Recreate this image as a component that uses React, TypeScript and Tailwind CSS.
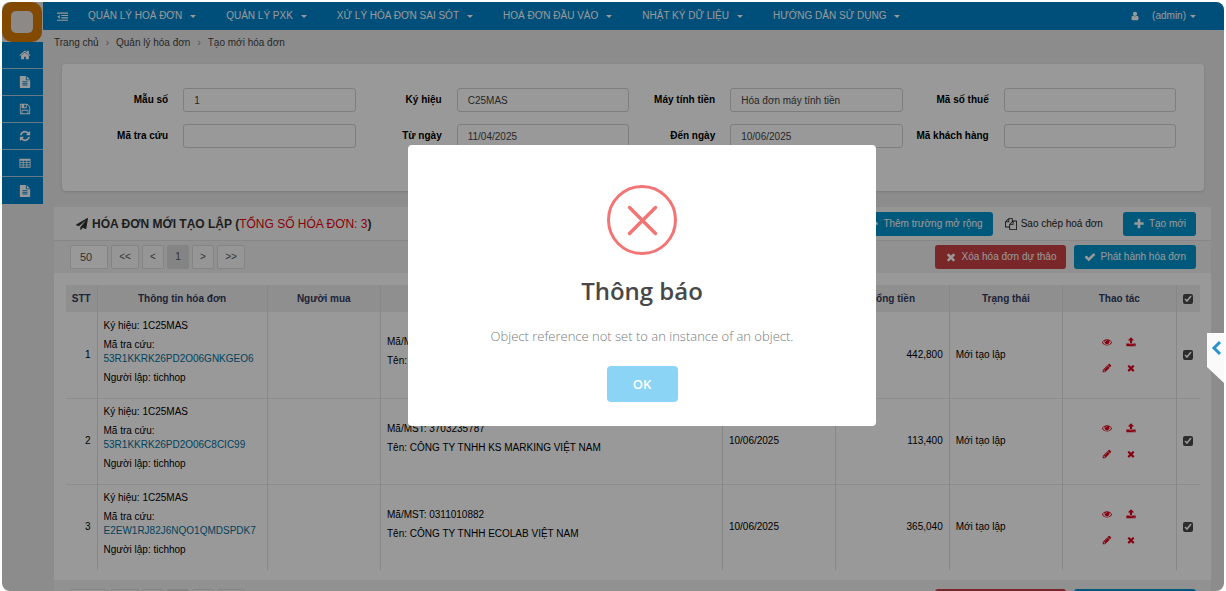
import type { ReactNode } from 'react';

const icons = {
  home: 'M1472 992v480q0 26-19 45t-45 19h-384v-384h-256v384h-384q-26 0-45-19t-19-45v-480q0-1 .5-3t.5-3l575-474 575 474q1 2 1 6zm223-69l-62 74q-8 9-21 11h-3q-13 0-21-7l-692-577-692 577q-12 8-24 7-13-2-21-11l-62-74q-8-10-7-23.5t11-21.5l719-599q32-26 76-26t76 26l244 204v-195q0-14 9-23t23-9h192q14 0 23 9t9 23v408l219 182q10 8 11 21.5t-7 23.5z',
  file: 'M1596 476q14 14 28 36h-472v-472q22 14 36 28zm-476 164h544v1056q0 40-28 68t-68 28h-1344q-40 0-68-28t-28-68v-1600q0-40 28-68t68-28h800v544q0 40 28 68t68 28zm160 736v-64q0-14-9-23t-23-9h-704q-14 0-23 9t-9 23v64q0 14 9 23t23 9h704q14 0 23-9t9-23zm0-256v-64q0-14-9-23t-23-9h-704q-14 0-23 9t-9 23v64q0 14 9 23t23 9h704q14 0 23-9t9-23zm0-256v-64q0-14-9-23t-23-9h-704q-14 0-23 9t-9 23v64q0 14 9 23t23 9h704q14 0 23-9t9-23z',
  save: 'M512 1536h768v-384h-768v384zm896 0h128v-896q0-14-10-38.5t-20-34.5l-281-281q-10-10-34-20t-39-10v416q0 40-28 68t-68 28h-576q-40 0-68-28t-28-68v-416h-128v1280h128v-416q0-40 28-68t68-28h832q40 0 68 28t28 68v416zm-384-928v-320q0-13-9.5-22.5t-22.5-9.5h-192q-13 0-22.5 9.5t-9.5 22.5v320q0 13 9.5 22.5t22.5 9.5h192q13 0 22.5-9.5t9.5-22.5zm640 32v928q0 40-28 68t-68 28h-1344q-40 0-68-28t-28-68v-1344q0-40 28-68t68-28h928q40 0 88 20t76 48l280 280q28 28 48 76t20 88z',
  refresh: 'M1639 1056q0 5-1 7-64 268-268 434.5t-478 166.5q-146 0-282.5-55t-243.5-157l-129 129q-19 19-45 19t-45-19-19-45v-448q0-26 19-45t45-19h448q26 0 45 19t19 45-19 45l-137 137q71 66 161 102t187 36q134 0 250-65t186-179q11-17 53-117 8-23 30-23h192q13 0 22.5 9.5t9.5 22.5zm25-800v448q0 26-19 45t-45 19h-448q-26 0-45-19t-19-45 19-45l138-138q-148-137-349-137-134 0-250 65t-186 179q-11 17-53 117-8 23-30 23h-199q-13 0-22.5-9.5t-9.5-22.5v-7q65-268 270-434.5t480-166.5q146 0 284 55.5t245 156.5l130-129q19-19 45-19t45 19 19 45z',
  table: 'M64 320q0-64 64-64h1536q64 0 64 64v1216q0 64-64 64h-1536q-64 0-64-64zM192 576v224h368v-224zM688 576v224h416v-224zM1232 576v224h368v-224zM192 912v224h368v-224zM688 912v224h416v-224zM1232 912v224h368v-224zM192 1248v224h368v-224zM688 1248v224h416v-224zM1232 1248v224h368v-224z',
  outdent: 'M0 256h1792v192h-1792zM704 640h1088v192h-1088zM704 1024h1088v192h-1088zM0 1408h1792v192h-1792zM448 608v640l-384-320z',
  user: 'M1536 1399q0 109-62.5 187t-150.5 78h-854q-88 0-150.5-78t-62.5-187q0-85 8.5-160.5t31.5-152 58.5-131 94-89 134.5-34.5q131 128 313 128t313-128q76 0 134.5 34.5t94 89 58.5 131 31.5 152 8.5 160.5zm-256-887q0 159-112.5 271.5t-271.5 112.5-271.5-112.5-112.5-271.5 112.5-271.5 271.5-112.5 271.5 112.5 112.5 271.5z',
  plane: 'M1764 11q33 24 27 64l-256 1536q-5 29-32 45-14 8-31 8-11 0-24-5l-453-185-242 295q-18 23-49 23-13 0-22-4-19-7-30.5-23.5t-11.5-36.5v-349l864-1059-1069 925-395-162q-37-14-40-55-2-40 32-59l1664-960q15-9 32-9 20 0 36 11z',
  plus: 'M1600 736v192q0 40-28 68t-68 28h-416v416q0 40-28 68t-68 28h-192q-40 0-68-28t-28-68v-416h-416q-40 0-68-28t-28-68v-192q0-40 28-68t68-28h416v-416q0-40 28-68t68-28h192q40 0 68 28t28 68v416h416q40 0 68 28t28 68z',
  times: 'M1490 1322q0 40-28 68l-136 136q-28 28-68 28t-68-28l-294-294-294 294q-28 28-68 28t-68-28l-136-136q-28-28-28-68t28-68l294-294-294-294q-28-28-28-68t28-68l136-136q28-28 68-28t68 28l294 294 294-294q28-28 68-28t68 28l136 136q28 28 28 68t-28 68l-294 294 294 294q28 28 28 68z',
  check: 'M1671 566q0 40-28 68l-724 724-136 136q-28 28-68 28t-68-28l-136-136-362-362q-28-28-28-68t28-68l136-136q28-28 68-28t68 28l294 295 656-657q28-28 68-28t68 28l136 136q28 28 28 68z',
  eye: 'M1664 960q-152-236-381-353 61 104 61 225 0 185-131.5 316.5t-316.5 131.5-316.5-131.5-131.5-316.5q0-121 61-225-229 117-381 353 133 205 333.5 326.5t434.5 121.5 434.5-121.5 333.5-326.5zm-720-384q0-20-14-34t-34-14q-125 0-214.5 89.5t-89.5 214.5q0 20 14 34t34 14 34-14 14-34q0-86 61-147t147-61q20 0 34-14t14-34zm848 384q0 34-20 69-140 230-376.5 368.5t-499.5 138.5-499.5-139-376.5-368q-20-35-20-69t20-69q140-229 376.5-368t499.5-139 499.5 139 376.5 368q20 35 20 69z',
  upload: 'M1344 1472q0-26-19-45t-45-19-45 19-19 45 19 45 45 19 45-19 19-45zm256 0q0-26-19-45t-45-19-45 19-19 45 19 45 45 19 45-19 19-45zm128-224v320q0 40-28 68t-68 28h-1472q-40 0-68-28t-28-68v-320q0-40 28-68t68-28h427q21 56 70.5 92t110.5 36h256q61 0 110.5-36t70.5-92h427q40 0 68 28t28 68zm-325-648q-17 40-59 40h-256v448q0 26-19 45t-45 19h-256q-26 0-45-19t-19-45v-448h-256q-42 0-59-40-17-39 14-69l448-448q18-19 45-19t45 19l448 448q31 30 14 69z',
  pencil: 'M491 1536l91-91-235-235-91 91v107h128v128h107zm523-928q0-22-22-22-10 0-17 7l-542 542q-7 7-7 17 0 22 22 22 10 0 17-7l542-542q7-7 7-17zm-54-192l416 416-832 832h-416v-416zm683 96q0 53-37 90l-166 166-416-416 166-165q36-38 90-38 53 0 91 38l235 234q37 39 37 91z',
  copy: 'M1696 384q40 0 68 28t28 68v1216q0 40-28 68t-68 28h-960q-40 0-68-28t-28-68v-288h-544q-40 0-68-28t-28-68v-672q0-40 20-88t48-76l408-408q28-28 76-48t88-20h416q40 0 68 28t28 68v328q68-40 128-40h416zm-544 213l-299 299h299v-299zm-640-384l-299 299h299v-299zm196 647l316-316v-416h-384v416q0 40-28 68t-68 28h-416v640h512v-256q0-40 20-88t48-76zm956 804v-1152h-384v416q0 40-28 68t-68 28h-416v640h896z',
};

type IconName = keyof typeof icons;

function Icon({ name, className = 'size-3' }: { name: IconName; className?: string }) {
  return (
    <svg viewBox="0 0 1792 1792" fill="currentColor" fillRule="evenodd" aria-hidden="true" className={`shrink-0 ${className}`}>
      <path d={icons[name]} />
    </svg>
  );
}

function Caret() {
  return <span className="border-x-3 border-t-3 border-x-transparent border-t-current" />;
}

const menu = ['QUẢN LÝ HOÁ ĐƠN', 'QUẢN LÝ PXK', 'XỬ LÝ HÓA ĐƠN SAI SÓT', 'HOÁ ĐƠN ĐẦU VÀO', 'NHẬT KÝ DỮ LIỆU', 'HƯỚNG DẪN SỬ DỤNG'];

const sideItems: { icon: IconName; label: string }[] = [
  { icon: 'home', label: 'Trang chủ' },
  { icon: 'file', label: 'Hóa đơn' },
  { icon: 'save', label: 'Lưu' },
  { icon: 'refresh', label: 'Làm mới' },
  { icon: 'table', label: 'Bảng kê' },
  { icon: 'file', label: 'Báo cáo' },
];

const fields = [
  { id: 'mauSo', label: 'Mẫu số', value: '1' },
  { id: 'kyHieu', label: 'Ký hiệu', value: 'C25MAS' },
  { id: 'mayTinhTien', label: 'Máy tính tiền', value: 'Hóa đơn máy tính tiền' },
  { id: 'maSoThue', label: 'Mã số thuế', value: '' },
  { id: 'maTraCuu', label: 'Mã tra cứu', value: '' },
  { id: 'tuNgay', label: 'Từ ngày', value: '11/04/2025' },
  { id: 'denNgay', label: 'Đến ngày', value: '10/06/2025' },
  { id: 'maKhachHang', label: 'Mã khách hàng', value: '' },
];

const invoices = [
  { code: '53R1KKRK26PD2O06GNKGEO6', taxCode: '', company: '', date: '10/06/2025', total: '442,800' },
  { code: '53R1KKRK26PD2O06C8CIC99', taxCode: '3703235787', company: 'CÔNG TY TNHH KS MARKING VIỆT NAM', date: '10/06/2025', total: '113,400' },
  { code: 'E2EW1RJ82J6NQO1QMDSPDK7', taxCode: '0311010882', company: 'CÔNG TY TNHH ECOLAB VIỆT NAM', date: '10/06/2025', total: '365,040' },
];

const actions: { icon: IconName; label: string }[] = [
  { icon: 'eye', label: 'Xem' },
  { icon: 'upload', label: 'Phát hành' },
  { icon: 'pencil', label: 'Sửa' },
  { icon: 'times', label: 'Xóa' },
];

function ActionButton({ icon, color, children }: { icon: IconName; color: string; children: ReactNode }) {
  return (
    <button type="button" className={`flex h-6 items-center gap-1 rounded-[3px] px-[10px] text-white ${color}`}>
      <Icon name={icon} />
      {children}
    </button>
  );
}

function Toolbar() {
  return (
    <div className="flex h-8 items-center justify-between bg-[#f2f2f2] pr-[15px] pl-4">
      <div className="flex items-center gap-[3px] text-[#555]">
        <select aria-label="Số dòng" className="h-6 w-[38px] appearance-none rounded-xs border border-[#ddd] bg-white pl-[9px] text-[11px]">
          <option>50</option>
        </select>
        {['<<', '<', '1', '>', '>>'].map((page) => (
          <button
            key={page}
            type="button"
            className={`h-6 rounded-xs border border-[#ddd] ${page.length > 1 ? 'w-[28px]' : 'w-[22px]'} ${page === '1' ? 'bg-[#dcdcdc]' : 'bg-[#fafafa]'}`}
          >
            {page}
          </button>
        ))}
      </div>
      <div className="flex gap-2">
        <ActionButton icon="times" color="bg-[#cb4145]">Xóa hóa đơn dự thảo</ActionButton>
        <ActionButton icon="check" color="bg-[#0094cc]">Phát hành hóa đơn</ActionButton>
      </div>
    </div>
  );
}

function InvoiceTable() {
  return (
    <table className="w-full table-fixed border-collapse text-[10px] leading-[14px] text-black">
      <colgroup>
        <col className="w-[31px]" />
        <col className="w-[15%]" />
        <col className="w-[10%]" />
        <col />
        <col className="w-[10%]" />
        <col className="w-[10%]" />
        <col className="w-[10%]" />
        <col className="w-[10%]" />
        <col className="w-6" />
      </colgroup>
      <thead>
        <tr className="h-[27px] bg-[#eeeef0] text-[#343c5c]">
          {['STT', 'Thông tin hóa đơn', 'Người mua', 'Đơn vị mua', 'Ngày lập', 'Tổng tiền', 'Trạng thái', 'Thao tác'].map((name) => (
            <th key={name} className="border-r border-[#e2e2e2] font-bold">{name}</th>
          ))}
          <th>
            <input type="checkbox" aria-label="Chọn tất cả" defaultChecked className="mx-auto block size-[10px] accent-[#4a4a4a]" />
          </th>
        </tr>
      </thead>
      <tbody>
        {invoices.map((invoice, index) => (
          <tr key={invoice.code} className="h-[86px] border-b border-[#ebebeb] last:border-b-0">
            <td className="border-r border-[#e2e2e2] pr-[6px] text-right">{index + 1}</td>
            <td className="space-y-[5px] border-r border-[#e2e2e2] px-[6px] pb-[6px]">
              <p>Ký hiệu: 1C25MAS</p>
              <p>
                Mã tra cứu:
                <br />
                <a href="#" className="text-[#00709c]">{invoice.code}</a>
              </p>
              <p>Người lập: tichhop</p>
            </td>
            <td className="border-r border-[#e2e2e2]" />
            <td className="space-y-[5px] border-r border-[#e2e2e2] px-[6px] pb-[6px]">
              <p>Mã/MST: {invoice.taxCode}</p>
              <p>Tên: {invoice.company}</p>
            </td>
            <td className="border-r border-[#e2e2e2] px-[6px]">{invoice.date}</td>
            <td className="border-r border-[#e2e2e2] px-[6px] text-right">{invoice.total}</td>
            <td className="border-r border-[#e2e2e2] px-[6px]">Mới tạo lập</td>
            <td className="border-r border-[#e2e2e2]">
              <div className="mx-auto grid w-12 grid-cols-2 gap-y-4">
                {actions.map((action) => (
                  <button key={action.label} type="button" aria-label={action.label} className="flex justify-center text-[#e0001b]">
                    <Icon name={action.icon} className="size-[10px]" />
                  </button>
                ))}
              </div>
            </td>
            <td>
              <input type="checkbox" aria-label={`Chọn hóa đơn ${index + 1}`} defaultChecked className="mx-auto block size-[10px] accent-[#4a4a4a]" />
            </td>
          </tr>
        ))}
      </tbody>
    </table>
  );
}

function AlertDialog() {
  return (
    <div className="absolute inset-0 flex items-start justify-center bg-black/40 pt-[143px] pl-[58px]">
      <div
        role="alertdialog"
        aria-labelledby="alert-title"
        aria-describedby="alert-text"
        className="flex w-[468px] flex-col items-center rounded-[4px] bg-white pt-10 pb-6 font-['Open_Sans',sans-serif]"
      >
        <svg viewBox="0 0 70 70" className="size-[70px]" fill="none" stroke="#f27474" strokeWidth="3" strokeLinecap="round" aria-hidden="true">
          <circle cx="35" cy="35" r="33.5" />
          <path d="M22.5 22.5l26 26M48.5 22.5l-26 26" strokeWidth="3.5" />
        </svg>
        <h2 id="alert-title" className="mt-5 text-[24px] leading-8 font-semibold text-[#484848]">Thông báo</h2>
        <p id="alert-text" className="mt-[19px] text-[13px] leading-5 font-light text-[#797979]">Object reference not set to an instance of an object.</p>
        <button type="button" className="mt-5 h-9 w-[71px] rounded-[4px] bg-[#8cd4f5] text-[13px] font-semibold text-white">OK</button>
      </div>
    </div>
  );
}

export default function App() {
  return (
    <div className="h-screen bg-white px-[2px] pt-[2px] font-['Liberation_Sans',Arial,sans-serif] text-[10px] leading-[14px]">
      <div className="relative flex h-full overflow-hidden rounded-lg bg-[#e9e9e9]">
        <aside className="w-[41px] shrink-0">
          <a href="#" aria-label="Trang đầu" className="flex size-10 items-center justify-center rounded-[10px] bg-[#d97a00]">
            <span className="size-[22px] rounded-[5px] bg-[#e9e4e0]" />
          </a>
          <nav className="divide-y divide-[#a9c8dc] text-white">
            {sideItems.map((item, index) => (
              <a key={index} href="#" aria-label={item.label} className="flex h-[27px] items-center justify-center bg-[#0083cc] pl-1">
                <Icon name={item.icon} />
              </a>
            ))}
          </nav>
        </aside>

        <main className="min-w-0 flex-1">
          <header className="flex h-7 items-center bg-[#0083cc] pr-7 pl-[14px] text-white">
            <button type="button" aria-label="Thu gọn menu">
              <Icon name="outdent" className="size-[11px]" />
            </button>
            <nav className="ml-5 flex gap-[30px]">
              {menu.map((item) => (
                <a key={item} href="#" className="flex items-center gap-2">
                  {item}
                  <Caret />
                </a>
              ))}
            </nav>
            <a href="#" className="ml-auto flex items-center gap-1">
              <Icon name="user" className="mr-2 size-[10px]" />
              (admin)
              <Caret />
            </a>
          </header>

          <div className="flex h-[34px] items-start gap-[7px] pt-[6px] pl-[11px] text-[#444]">
            <a href="#">Trang chủ</a>
            <span className="text-[#888]">›</span>
            <a href="#">Quản lý hóa đơn</a>
            <span className="text-[#888]">›</span>
            <span>Tạo mới hóa đơn</span>
          </div>

          <form className="mr-5 ml-[19px] grid grid-cols-4 gap-y-3 rounded-[4px] bg-white pt-6 pr-7 pb-[43px] pl-5 shadow-sm">
            {fields.map((field) => (
              <div key={field.id} className="flex items-center gap-[15px]">
                <label htmlFor={field.id} className="flex-1 text-right font-bold whitespace-nowrap text-black">{field.label}</label>
                <input
                  id={field.id}
                  type="text"
                  defaultValue={field.value}
                  className="h-6 w-[63%] rounded-[3px] border border-[#d2d2d2] px-[10px] text-[#444]"
                />
              </div>
            ))}
          </form>

          <section className="mt-4 mr-[13px] ml-[11px] bg-white">
            <div className="flex h-[34px] items-center justify-between border-b border-[#e2e2e2] bg-[#f9f9f9] pr-[15px] pl-[22px]">
              <h1 className="flex items-center gap-1 text-[12px] font-bold text-[#333]">
                <Icon name="plane" />
                <span>
                  HÓA ĐƠN MỚI TẠO LẬP (<span className="font-normal text-[#e8000d]">TỔNG SỐ HÓA ĐƠN: 3</span>)
                </span>
              </h1>
              <div className="flex">
                <ActionButton icon="plus" color="bg-[#0094cc]">Thêm trường mở rộng</ActionButton>
                <button type="button" className="mr-5 ml-3 flex items-center gap-1 text-[#222]">
                  <Icon name="copy" />
                  Sao chép hoá đơn
                </button>
                <ActionButton icon="plus" color="bg-[#0094cc]">Tạo mới</ActionButton>
              </div>
            </div>
            <Toolbar />
            <div className="pt-3 pr-[11px] pb-[10px] pl-3">
              <InvoiceTable />
            </div>
            <div className="bg-[#f2f2f2] pt-[5px]">
              <Toolbar />
            </div>
          </section>
        </main>

        <AlertDialog />

        {/* slide-out handle */}
        <button type="button" aria-label="Mở bảng bên" className="absolute top-[331px] right-0">
          <svg viewBox="0 0 17 50" className="h-[50px] w-[17px]" aria-hidden="true">
            <path d="M0 0h17v50L0 34z" fill="#fafafa" />
            <path d="M13 9l-6 6 6 6" fill="none" stroke="#2a93cf" strokeWidth="3" />
          </svg>
        </button>
      </div>
    </div>
  );
}
